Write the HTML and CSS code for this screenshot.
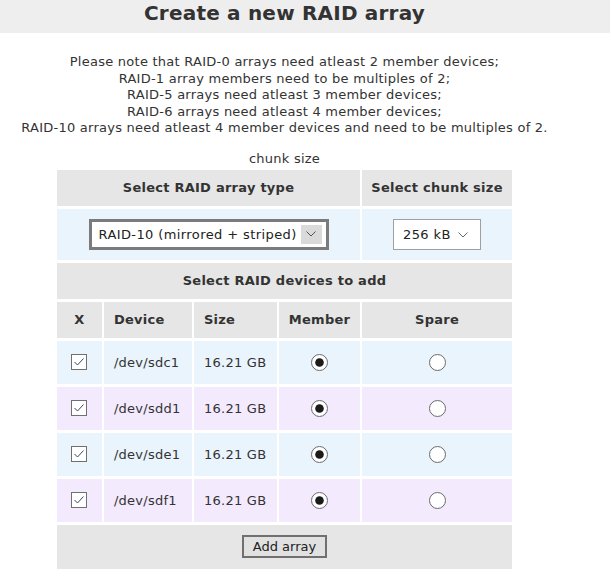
FILE: index.html
```html
<!DOCTYPE html>
<html>
<head>
<meta charset="utf-8">
<title>Create a new RAID array</title>
<link rel="stylesheet" href="styles.css">
</head>
<body>
<div class="titlebar"><h1>Create a new RAID array</h1></div>
<div class="page">
  <p class="notes">Please note that RAID-0 arrays need atleast 2 member devices;<br>
  RAID-1 array members need to be multiples of 2;<br>
  RAID-5 arrays need atleast 3 member devices;<br>
  RAID-6 arrays need atleast 4 member devices;<br>
  RAID-10 arrays need atleast 4 member devices and need to be multiples of 2.</p>
  <table class="raid">
    <caption>chunk size</caption>
    <colgroup>
      <col class="c-x"><col class="c-dev"><col class="c-size"><col class="c-mem"><col class="c-spare">
    </colgroup>
    <tr class="hdr">
      <th colspan="4">Select RAID array type</th>
      <th>Select chunk size</th>
    </tr>
    <tr class="selrow">
      <td colspan="4">
        <span class="sel sel-type">
          <select><option>RAID-10 (mirrored + striped)</option></select>
          <span class="arrowbox"><svg width="10" height="6" viewBox="0 0 10 6"><polyline points="0.5,0.5 5,5 9.5,0.5" fill="none" stroke="#555" stroke-width="1"/></svg></span>
        </span>
      </td>
      <td>
        <span class="sel sel-chunk">
          <select><option>256 kB</option></select>
          <span class="arrow"><svg width="10" height="6" viewBox="0 0 10 6"><polyline points="0.5,0.5 5,5 9.5,0.5" fill="none" stroke="#666" stroke-width="1"/></svg></span>
        </span>
      </td>
    </tr>
    <tr class="hdr">
      <th colspan="5">Select RAID devices to add</th>
    </tr>
    <tr class="hdr cols">
      <th>X</th>
      <th class="left">Device</th>
      <th class="left">Size</th>
      <th>Member</th>
      <th>Spare</th>
    </tr>
    <tr class="dev blue">
      <td><svg class="cb" width="16" height="16" viewBox="0 0 16 16"><rect x="0.5" y="0.5" width="15" height="15" fill="#fff" stroke="#707070"/><polyline points="3.5,8 6.5,11 12.5,4.5" fill="none" stroke="#3b4660" stroke-width="1"/></svg></td>
      <td class="left">/dev/sdc1</td>
      <td class="left">16.21 GB</td>
      <td><svg class="rb" width="17" height="17" viewBox="0 0 17 17"><circle cx="8.5" cy="8.5" r="8" fill="#fff" stroke="#6a6a6a"/><circle cx="8.5" cy="8.5" r="4.3" fill="#1b1b1b"/></svg></td>
      <td><svg class="rb" width="17" height="17" viewBox="0 0 17 17"><circle cx="8.5" cy="8.5" r="8" fill="#fff" stroke="#6a6a6a"/></svg></td>
    </tr>
    <tr class="dev lilac">
      <td><svg class="cb" width="16" height="16" viewBox="0 0 16 16"><rect x="0.5" y="0.5" width="15" height="15" fill="#fff" stroke="#707070"/><polyline points="3.5,8 6.5,11 12.5,4.5" fill="none" stroke="#3b4660" stroke-width="1"/></svg></td>
      <td class="left">/dev/sdd1</td>
      <td class="left">16.21 GB</td>
      <td><svg class="rb" width="17" height="17" viewBox="0 0 17 17"><circle cx="8.5" cy="8.5" r="8" fill="#fff" stroke="#6a6a6a"/><circle cx="8.5" cy="8.5" r="4.3" fill="#1b1b1b"/></svg></td>
      <td><svg class="rb" width="17" height="17" viewBox="0 0 17 17"><circle cx="8.5" cy="8.5" r="8" fill="#fff" stroke="#6a6a6a"/></svg></td>
    </tr>
    <tr class="dev blue">
      <td><svg class="cb" width="16" height="16" viewBox="0 0 16 16"><rect x="0.5" y="0.5" width="15" height="15" fill="#fff" stroke="#707070"/><polyline points="3.5,8 6.5,11 12.5,4.5" fill="none" stroke="#3b4660" stroke-width="1"/></svg></td>
      <td class="left">/dev/sde1</td>
      <td class="left">16.21 GB</td>
      <td><svg class="rb" width="17" height="17" viewBox="0 0 17 17"><circle cx="8.5" cy="8.5" r="8" fill="#fff" stroke="#6a6a6a"/><circle cx="8.5" cy="8.5" r="4.3" fill="#1b1b1b"/></svg></td>
      <td><svg class="rb" width="17" height="17" viewBox="0 0 17 17"><circle cx="8.5" cy="8.5" r="8" fill="#fff" stroke="#6a6a6a"/></svg></td>
    </tr>
    <tr class="dev lilac">
      <td><svg class="cb" width="16" height="16" viewBox="0 0 16 16"><rect x="0.5" y="0.5" width="15" height="15" fill="#fff" stroke="#707070"/><polyline points="3.5,8 6.5,11 12.5,4.5" fill="none" stroke="#3b4660" stroke-width="1"/></svg></td>
      <td class="left">/dev/sdf1</td>
      <td class="left">16.21 GB</td>
      <td><svg class="rb" width="17" height="17" viewBox="0 0 17 17"><circle cx="8.5" cy="8.5" r="8" fill="#fff" stroke="#6a6a6a"/><circle cx="8.5" cy="8.5" r="4.3" fill="#1b1b1b"/></svg></td>
      <td><svg class="rb" width="17" height="17" viewBox="0 0 17 17"><circle cx="8.5" cy="8.5" r="8" fill="#fff" stroke="#6a6a6a"/></svg></td>
    </tr>
    <tr class="foot">
      <td colspan="5"><button type="button" class="btn">Add array</button></td>
    </tr>
  </table>
</div>
</body>
</html>
```
FILE: styles.css
```css
body {
  margin: 0;
  font-family: "DejaVu Sans", Verdana, sans-serif;
  font-size: 13px;
  letter-spacing: 0.25px;
  color: #333;
  background: #fff;
}
.titlebar {
  width: 610px;
  height: 33px;
  background: #eeeeee;
}
.titlebar h1 {
  width: 569px;
  margin: 0;
  text-align: center;
  font-size: 20px;
  letter-spacing: 0.2px;
  line-height: 26px;
  font-weight: bold;
  color: #333;
}
.page {
  width: 569px;
  text-align: center;
}
.notes {
  margin: 21px 0 0 0;
  line-height: 16.5px;
}
.raid {
  margin: 0 auto;
  width: 459px;
  table-layout: fixed;
  border-collapse: separate;
  border-spacing: 2px 3px;
}
.raid caption {
  padding: 14px 0 0;
  line-height: 16px;
}
.c-x { width: 45px; }
.c-dev { width: 88px; }
.c-size { width: 83px; }
.c-mem { width: 81px; }
.c-spare { width: 150px; }
.raid th, .raid td {
  padding: 0;
  text-align: center;
  vertical-align: middle;
}
.hdr th {
  height: 36px;
  background: #e6e6e6;
  font-weight: bold;
}
.raid .left {
  text-align: left;
  padding-left: 10px;
}
.selrow td {
  height: 51px;
  background: #eaf4fd;
}
.sel {
  position: relative;
  display: inline-block;
  vertical-align: middle;
}
.sel select {
  appearance: none;
  -webkit-appearance: none;
  font-family: inherit;
  font-size: 13px;
  letter-spacing: 0.4px;
  color: #222;
  background: #fff;
  margin: 0;
  border-radius: 0;
  outline: none;
}
.sel-type select {
  width: 240px;
  height: 31px;
  border: 3px solid #7b7b7b;
  padding: 0 0 0 7px;
}
.sel-chunk select {
  width: 88px;
  height: 31px;
  border: 1px solid #a0a0a0;
  padding: 0 0 0 9px;
}
.arrowbox {
  position: absolute;
  right: 7px;
  top: 6px;
  width: 21px;
  height: 19px;
  background: #dadada;
  display: flex;
  align-items: center;
  justify-content: center;
  pointer-events: none;
}
.arrow {
  position: absolute;
  right: 13px;
  top: 13px;
  display: flex;
  pointer-events: none;
}
.dev td {
  height: 43px;
}
.blue td { background: #eaf4fd; }
.lilac td { background: #f4eafd; }
.cb, .rb {
  display: block;
  margin: 0 auto;
}
.foot td {
  height: 44px;
  background: #e6e6e6;
}
.btn {
  font-family: inherit;
  font-size: 13px;
  letter-spacing: 0;
  color: #222;
  width: 85px;
  height: 23px;
  padding: 0;
  background: #e1e1e1;
  border: 2px solid #707070;
  border-radius: 0;
}
```
